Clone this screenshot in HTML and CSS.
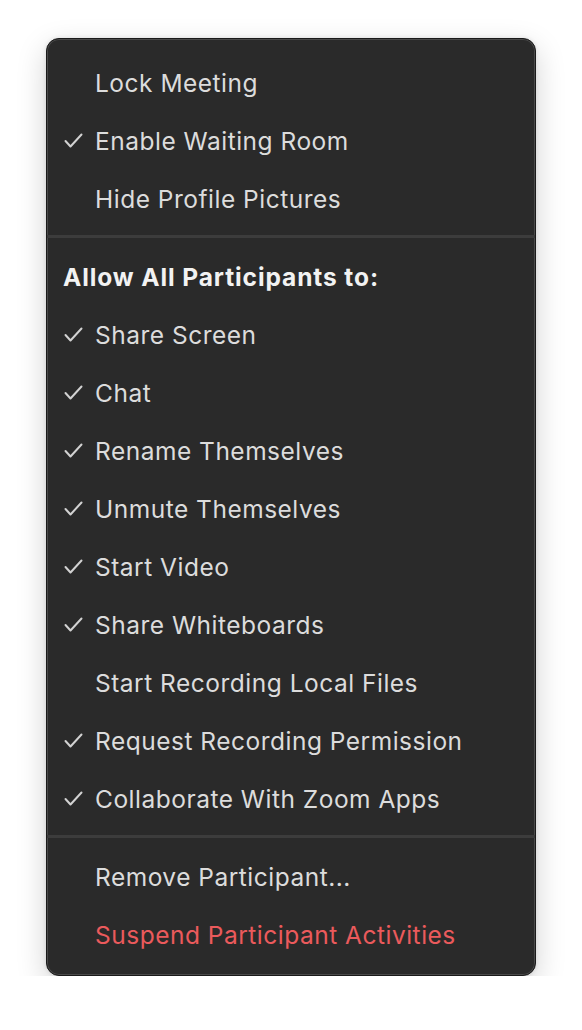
FILE: index.html
```html
<!DOCTYPE html>
<html lang="en">
  <head>
    <meta charset="UTF-8" />
    <title>Participant Options</title>
    <link rel="stylesheet" href="styles.css">
  </head>
  <body>
    <div class="menu">
      <div class="item">Lock Meeting</div>
      <div class="item"><svg class="check" viewBox="0 0 19 15"><path d="M1.5 8 L6.5 13.5 L17.5 1.5"></path></svg>Enable Waiting Room</div>
      <div class="item">Hide Profile Pictures</div>

      <div class="separator"></div>

      <div class="header">Allow All Participants to:</div>
      <div class="item"><svg class="check" viewBox="0 0 19 15"><path d="M1.5 8 L6.5 13.5 L17.5 1.5"></path></svg>Share Screen</div>
      <div class="item"><svg class="check" viewBox="0 0 19 15"><path d="M1.5 8 L6.5 13.5 L17.5 1.5"></path></svg>Chat</div>
      <div class="item"><svg class="check" viewBox="0 0 19 15"><path d="M1.5 8 L6.5 13.5 L17.5 1.5"></path></svg>Rename Themselves</div>
      <div class="item"><svg class="check" viewBox="0 0 19 15"><path d="M1.5 8 L6.5 13.5 L17.5 1.5"></path></svg>Unmute Themselves</div>
      <div class="item"><svg class="check" viewBox="0 0 19 15"><path d="M1.5 8 L6.5 13.5 L17.5 1.5"></path></svg>Start Video</div>
      <div class="item"><svg class="check" viewBox="0 0 19 15"><path d="M1.5 8 L6.5 13.5 L17.5 1.5"></path></svg>Share Whiteboards</div>
      <div class="item">Start Recording Local Files</div>
      <div class="item"><svg class="check" viewBox="0 0 19 15"><path d="M1.5 8 L6.5 13.5 L17.5 1.5"></path></svg>Request Recording Permission</div>
      <div class="item"><svg class="check" viewBox="0 0 19 15"><path d="M1.5 8 L6.5 13.5 L17.5 1.5"></path></svg>Collaborate With Zoom Apps</div>

      <div class="separator"></div>

      <div class="item">Remove Participant...</div>
      <div class="item danger">Suspend Participant Activities</div>
    </div>
  </body>
</html>
```

FILE: styles.css
```css
* {
  margin: 0;
  padding: 0;
  box-sizing: border-box;
}

body {
  background-color: #ffffff;
  font-family: Inter, "Noto Sans", "Liberation Sans", sans-serif;
  padding: 38px 46px 0 46px;
}

.menu {
  width: 490px;
  background-color: #2a2a2a;
  border: 1px solid #1a1a1a;
  border-radius: 13px;
  box-shadow: inset 0 0 0 1px #4a4a4a, 0 10px 30px rgba(0,0,0,0.18), 0 0 4px rgba(0,0,0,0.1);
  padding: 15px 0 11px 0;
}

.item,
.header {
  height: 58px;
  display: flex;
  align-items: center;
  font-size: 24.5px;
  letter-spacing: 0.5px;
  color: #dcdcdc;
  padding-left: 48px;
  position: relative;
}

.header {
  padding-left: 16px;
  font-weight: 700;
  letter-spacing: 0.9px;
  color: #f2f2f2;
}

.check {
  position: absolute;
  left: 17px;
  top: 21px;
  width: 19px;
  height: 15px;
  fill: none;
  stroke: #d2d2d2;
  stroke-width: 2;
  stroke-linecap: round;
  stroke-linejoin: round;
}

.danger {
  color: #eb5a5c;
}

.separator {
  height: 3px;
  background-color: #3c3c3c;
  margin: 7px 0 10px 0;
}
```
